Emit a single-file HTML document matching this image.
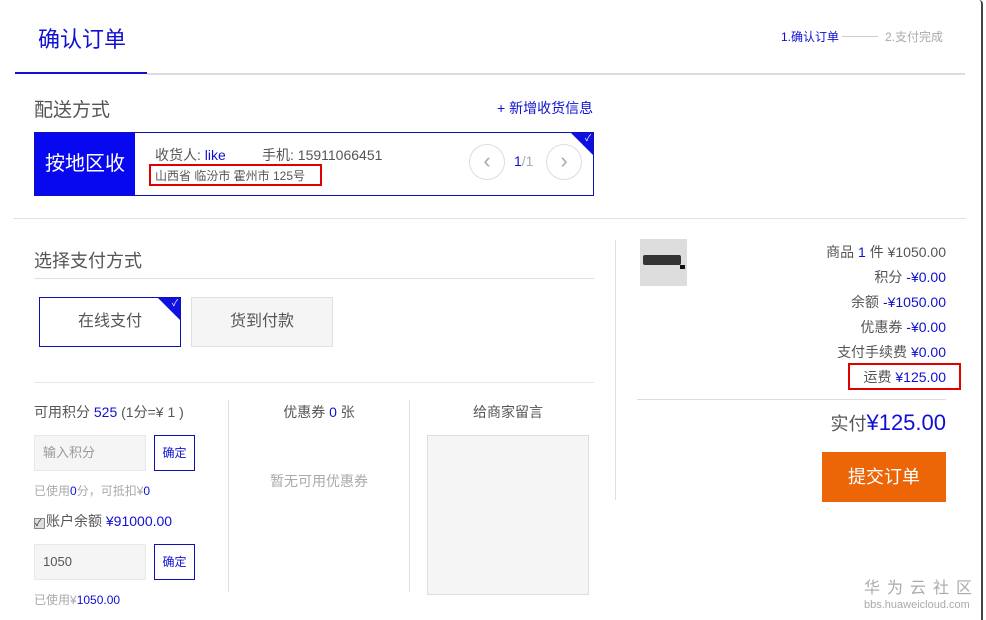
<!DOCTYPE html>
<html><head><meta charset="utf-8"><style>
*{margin:0;padding:0;box-sizing:border-box}
body{width:986px;height:620px;background:#fff;position:relative;overflow:hidden;font-family:"Liberation Sans","Noto Sans CJK SC",sans-serif;color:#555}
.a{position:absolute;white-space:nowrap}
.b{color:#1010d0}
.r{text-align:right}
.tri{position:absolute;width:0;height:0;border-top:22px solid #1010e0;border-left:22px solid transparent}
.ck{position:absolute;color:#fff;font-size:9px;line-height:9px}
</style></head><body>
<div class="a" style="right:3px;top:0;width:4px;height:620px;border-right:2px solid #444;border-top-right-radius:12px"></div>
<div class="a b" style="left:38px;top:22px;font-size:22px">确认订单</div>
<div class="a" style="left:15px;top:72px;width:132px;height:2px;background:#1010d0"></div>
<div class="a" style="left:147px;top:73px;width:818px;height:2px;background:#ddd"></div>
<div class="a b" style="left:781px;top:28px;font-size:12px">1.确认订单</div>
<div class="a" style="left:842px;top:36px;width:36px;height:1px;background:#ccc"></div>
<div class="a" style="left:885px;top:28px;font-size:12px;color:#aaa">2.支付完成</div>

<div class="a" style="left:34px;top:95px;font-size:19px">配送方式</div>
<div class="a b" style="left:497px;top:98px;font-size:14px">+ 新增收货信息</div>
<div class="a" style="left:34px;top:132px;width:560px;height:64px;border:1px solid #1010b0">
 <div class="a" style="left:0;top:0;width:100px;height:62px;background:#0808f0;color:#fff;font-size:20px;line-height:62px;text-align:center">按地区收</div>
 <div class="a" style="left:120px;top:12px;font-size:14px">收货人: <span class="b">like</span></div>
 <div class="a" style="left:227px;top:12px;font-size:14px">手机: 15911066451</div>
 <div class="a" style="left:114px;top:31px;width:173px;height:22px;border:2px solid #e00000"></div>
 <div class="a" style="left:120px;top:34px;font-size:12px">山西省 临汾市 霍州市 125号</div>
 <div class="a" style="left:434px;top:11px;width:36px;height:36px;border:1px solid #ddd;border-radius:50%;color:#aaa;font-size:22px;line-height:32px;text-align:center">&lsaquo;</div>
 <div class="a" style="left:479px;top:20px;font-size:14px"><span class="b">1</span><span style="color:#aaa">/1</span></div>
 <div class="a" style="left:511px;top:11px;width:36px;height:36px;border:1px solid #ddd;border-radius:50%;color:#aaa;font-size:22px;line-height:32px;text-align:center">&rsaquo;</div>
 <div class="tri" style="right:0;top:0"></div><div class="ck" style="right:2px;top:1px">✓</div>
</div>
<div class="a" style="left:13px;top:218px;width:953px;height:1px;background:#e0e0e0"></div>
<div class="a" style="left:615px;top:240px;width:1px;height:260px;background:#e0e0e0"></div>

<div class="a" style="left:34px;top:247px;font-size:18px">选择支付方式</div>
<div class="a" style="left:34px;top:278px;width:560px;height:1px;background:#e0e0e0"></div>
<div class="a" style="left:39px;top:297px;width:142px;height:50px;border:1px solid #1010b0;font-size:16px;line-height:48px;text-align:center">在线支付<div class="tri" style="right:0;top:0"></div><div class="ck" style="right:2px;top:1px">✓</div></div>
<div class="a" style="left:191px;top:297px;width:142px;height:50px;border:1px solid #e0e0e0;background:#f5f5f5;font-size:16px;line-height:48px;text-align:center">货到付款</div>
<div class="a" style="left:34px;top:382px;width:560px;height:1px;background:#e8e8e8"></div>
<div class="a" style="left:228px;top:400px;width:1px;height:192px;background:#e0e0e0"></div>
<div class="a" style="left:409px;top:400px;width:1px;height:192px;background:#e0e0e0"></div>

<div class="a" style="left:34px;top:402px;font-size:14px">可用积分 <span class="b">525</span> (1分=¥ 1 )</div>
<div class="a" style="left:34px;top:435px;width:112px;height:36px;background:#f5f5f5;border:1px solid #e8e8e8;font-size:13px;line-height:34px;padding-left:8px;color:#999">输入积分</div>
<div class="a b" style="left:154px;top:435px;width:41px;height:36px;border:1px solid #1010b0;font-size:12px;line-height:34px;text-align:center">确定</div>
<div class="a" style="left:34px;top:482px;font-size:12px;color:#aaa">已使用<span class="b">0</span>分，可抵扣¥<span class="b">0</span></div>
<div class="a" style="left:34px;top:511px;font-size:14px"><span style="display:inline-block;width:11px;height:11px;background:#ddd;border:1px solid #888;font-size:9px;line-height:9px;color:#222;vertical-align:0px;margin-right:1px">✓</span>账户余额 <span class="b">¥91000.00</span></div>
<div class="a" style="left:34px;top:544px;width:112px;height:36px;background:#f5f5f5;border:1px solid #e8e8e8;font-size:13px;line-height:34px;padding-left:8px;color:#555">1050</div>
<div class="a b" style="left:154px;top:544px;width:41px;height:36px;border:1px solid #1010b0;font-size:12px;line-height:34px;text-align:center">确定</div>
<div class="a" style="left:34px;top:591px;font-size:12px;color:#aaa">已使用¥<span class="b">1050.00</span></div>

<div class="a" style="left:229px;top:402px;width:180px;text-align:center;font-size:14px">优惠券 <span class="b">0</span> 张</div>
<div class="a" style="left:229px;top:471px;width:180px;text-align:center;font-size:14px;color:#aaa">暂无可用优惠券</div>
<div class="a" style="left:410px;top:402px;width:196px;text-align:center;font-size:14px">给商家留言</div>
<div class="a" style="left:427px;top:435px;width:162px;height:160px;background:#f5f5f5;border:1px solid #ddd"></div>

<div class="a" style="left:640px;top:239px;width:47px;height:47px;background:#ddd"><div class="a" style="left:3px;top:16px;width:38px;height:10px;background:#333;border-radius:2px"></div><div class="a" style="left:40px;top:26px;width:5px;height:4px;background:#111"></div></div>
<div class="a r" style="right:40px;top:240px;font-size:14px;line-height:25px">商品 <span class="b">1</span> 件 ¥1050.00<br>积分 <span class="b">-¥0.00</span><br>余额 <span class="b">-¥1050.00</span><br>优惠券 <span class="b">-¥0.00</span><br>支付手续费 <span class="b">¥0.00</span><br>运费 <span class="b">¥125.00</span></div>
<div class="a" style="left:848px;top:363px;width:113px;height:27px;border:2px solid #e00000"></div>
<div class="a" style="left:637px;top:399px;width:309px;height:1px;background:#ddd"></div>
<div class="a r" style="right:40px;top:410px;font-size:18px">实付<span class="b" style="font-size:22px">¥125.00</span></div>
<div class="a" style="left:822px;top:452px;width:124px;height:50px;background:#ec6608;color:#fff;font-size:18px;line-height:50px;text-align:center">提交订单</div>

<div class="a" style="left:864px;top:579px;font-size:16px;line-height:20px;color:#aaa;letter-spacing:7px">华为云社区</div>
<div class="a" style="left:864px;top:598px;font-size:11px;line-height:14px;color:#aaa">bbs.huaweicloud.com</div>
</body></html>
